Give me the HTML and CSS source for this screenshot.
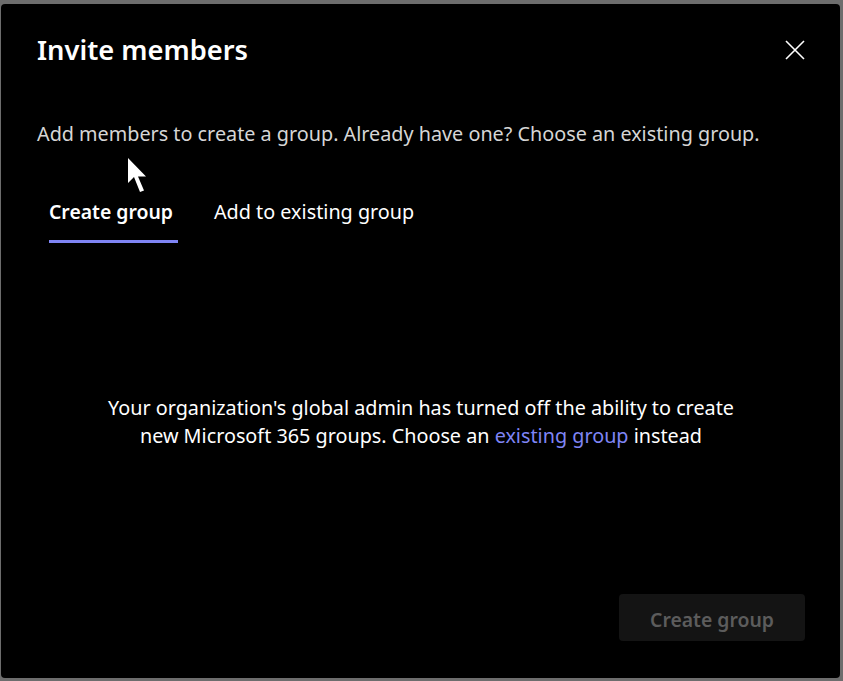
FILE: index.html
```html
<!DOCTYPE html>
<html lang="en">
<head>
    <meta charset="UTF-8">
    <meta name="viewport" content="width=device-width, initial-scale=1.0">
    <title>Invite members</title>
    <link rel="stylesheet" href="styles.css">
</head>
<body>
    <div class="dialog">
        <div class="dialog-header">
            <h1 class="dialog-title">Invite members</h1>
            <button class="close-button" aria-label="Close">
                <svg width="20" height="20" viewBox="0 0 20 20">
                    <path d="M1 1 L19 19 M19 1 L1 19" stroke="#ffffff" stroke-width="1.6" fill="none"/>
                </svg>
            </button>
        </div>

        <p class="dialog-intro">Add members to create a group. Already have one? Choose an existing group.</p>

        <div class="tabs">
            <a href="#create" class="tab active">Create group</a>
            <a href="#existing" class="tab">Add to existing group</a>
        </div>

        <!-- Message shown when group creation is disabled -->
        <div class="notice">
            <p>Your organization's global admin has turned off the ability to create<br>
            new Microsoft 365 groups. Choose an <a href="#existing" class="notice-link">existing group</a> instead</p>
        </div>

        <div class="dialog-footer">
            <button class="primary-button" disabled>Create group</button>
        </div>

        <!-- Mouse pointer -->
        <svg class="pointer" width="22" height="38" viewBox="0 0 22 38">
            <path d="M1 1 L1 26 L7 20 L13 35 L17 33.5 L11 19.5 L19 19.5 Z" fill="#ffffff"/>
        </svg>
    </div>
</body>
</html>
```

FILE: styles.css
```css
body {
    margin: 0;
    height: 100vh;
    background-color: #6d6d6d;
    font-family: 'Noto Sans', 'Open Sans', sans-serif;
    box-sizing: border-box;
    padding: 4px 3px 3px 1px;
}
.dialog {
    position: relative;
    height: 100%;
    box-sizing: border-box;
    background-color: #000000;
    border-radius: 4px;
    padding: 24px 35px 37px 36px;
    display: flex;
    flex-direction: column;
    color: white;
}
.dialog-header {
    display: flex;
    align-items: center;
    justify-content: space-between;
}
.dialog-title {
    margin: 0;
    font-size: 27.3px;
    font-weight: 600;
    line-height: 44px;
}
.close-button {
    background: none;
    border: none;
    padding: 0;
    margin-right: -2px;
    width: 24px;
    height: 24px;
    display: flex;
    align-items: center;
    justify-content: center;
    cursor: pointer;
}
.dialog-intro {
    margin: 48px 0 0 0;
    font-size: 19.8px;
    line-height: 28px;
    color: #d6d6d6;
}
.tabs {
    display: flex;
    gap: 36px;
    margin-top: 50px;
    padding-left: 12px;
}
.tab {
    text-decoration: none;
    color: white;
    font-size: 19.8px;
    line-height: 28px;
    padding: 0 5px 14px 0;
    border-bottom: 3px solid transparent;
}
.tab.active {
    font-size: 19.4px;
    font-weight: 600;
    border-bottom-color: #7f85f5;
}
.notice {
    flex: 1;
    display: flex;
    align-items: center;
    justify-content: center;
    text-align: center;
}
.notice p {
    margin: 6px 0 0 0;
    font-size: 19.8px;
    line-height: 28px;
}
.notice-link {
    color: #7f85f5;
    text-decoration: none;
}
.dialog-footer {
    display: flex;
    justify-content: flex-end;
}
.primary-button {
    background-color: #141414;
    color: #5c5c5c;
    border: none;
    border-radius: 4px;
    padding: 3px 31px 0 31px;
    height: 47px;
    font-family: inherit;
    font-size: 19.4px;
    font-weight: 600;
}
.pointer {
    position: absolute;
    left: 126px;
    top: 153px;
}
```
